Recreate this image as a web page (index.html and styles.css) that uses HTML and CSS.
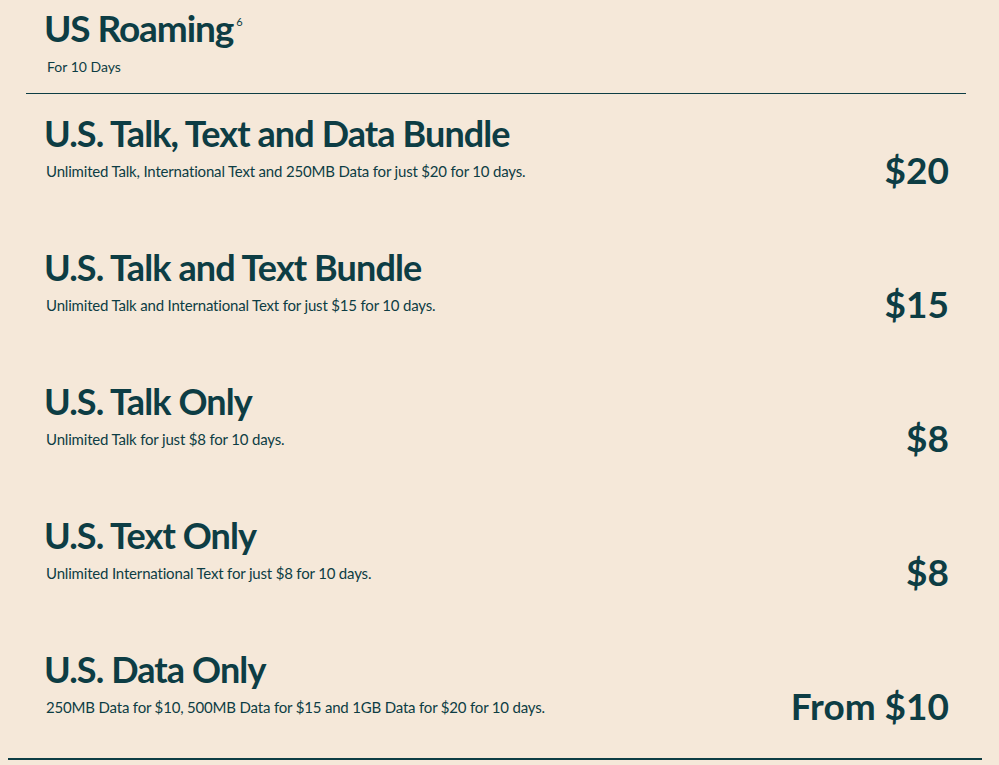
FILE: index.html
```html
<!DOCTYPE html>
<html lang="en">
<head>
<meta charset="utf-8">
<title>US Roaming</title>
<link rel="stylesheet" href="styles.css">
</head>
<body>
<main class="page">
  <header class="intro">
    <h1 class="intro-title">US Roaming<sup class="note">6</sup></h1>
    <p class="intro-sub">For 10 Days</p>
  </header>
  <hr class="rule-top">
  <section class="plans">
    <article class="plan">
      <div class="plan-info">
        <h2 class="plan-title">U.S. Talk, Text and Data Bundle</h2>
        <p class="plan-desc">Unlimited Talk, International Text and 250MB Data for just $20 for 10 days.</p>
      </div>
      <div class="plan-price">$20</div>
    </article>
    <article class="plan">
      <div class="plan-info">
        <h2 class="plan-title">U.S. Talk and Text Bundle</h2>
        <p class="plan-desc">Unlimited Talk and International Text for just $15 for 10 days.</p>
      </div>
      <div class="plan-price">$15</div>
    </article>
    <article class="plan">
      <div class="plan-info">
        <h2 class="plan-title">U.S. Talk Only</h2>
        <p class="plan-desc">Unlimited Talk for just $8 for 10 days.</p>
      </div>
      <div class="plan-price">$8</div>
    </article>
    <article class="plan">
      <div class="plan-info">
        <h2 class="plan-title">U.S. Text Only</h2>
        <p class="plan-desc">Unlimited International Text for just $8 for 10 days.</p>
      </div>
      <div class="plan-price">$8</div>
    </article>
    <article class="plan">
      <div class="plan-info">
        <h2 class="plan-title">U.S. Data Only</h2>
        <p class="plan-desc">250MB Data for $10, 500MB Data for $15 and 1GB Data for $20 for 10 days.</p>
      </div>
      <div class="plan-price">From $10</div>
    </article>
  </section>
  <hr class="rule-bottom">
</main>
</body>
</html>
```

FILE: styles.css
```css
html, body {
  margin: 0;
  padding: 0;
  background: #f5e8d9;
}

body {
  font-family: Lato, "Noto Sans", sans-serif;
  color: #0d3d44;
  overflow: hidden;
}

.page {
  width: 974px;
  margin-left: 8px;
}

.intro {
  padding: 8px 0 0 36px;
  height: 93px;
  box-sizing: border-box;
}

.intro-title {
  margin: 0;
  font-size: 37px;
  line-height: 40px;
  font-weight: 700;
  letter-spacing: -1.1px;
}

.note {
  font-size: 11px;
  font-weight: 400;
  letter-spacing: 0;
  vertical-align: top;
  position: relative;
  top: -6px;
  margin-left: 3px;
}

.intro-sub {
  margin: 11px 0 0 3px;
  font-size: 14px;
  line-height: 16px;
}

.rule-top {
  margin: 0 16px 0 18px;
  border: 0;
  border-top: 1px solid #0d3d44;
  height: 0;
}

.plans {
  display: flex;
  flex-direction: column;
}

.plan {
  display: flex;
  justify-content: space-between;
  align-items: flex-start;
  height: 134px;
  padding: 19px 33px 0 36px;
  box-sizing: border-box;
}

.plan:last-child {
  height: 128px;
}

.plan-title {
  margin: 0;
  font-size: 36px;
  line-height: 40px;
  font-weight: 700;
  letter-spacing: -0.9px;
}

.plan-desc {
  margin: 9px 0 0 2px;
  font-size: 15px;
  line-height: 18px;
  letter-spacing: -0.18px;
}

.plan-price {
  margin-top: 37px;
  font-size: 37px;
  line-height: 40px;
  font-weight: 700;
}

.rule-bottom {
  margin: 0;
  border: 0;
  border-top: 2px solid #0d3d44;
  height: 0;
}
```
